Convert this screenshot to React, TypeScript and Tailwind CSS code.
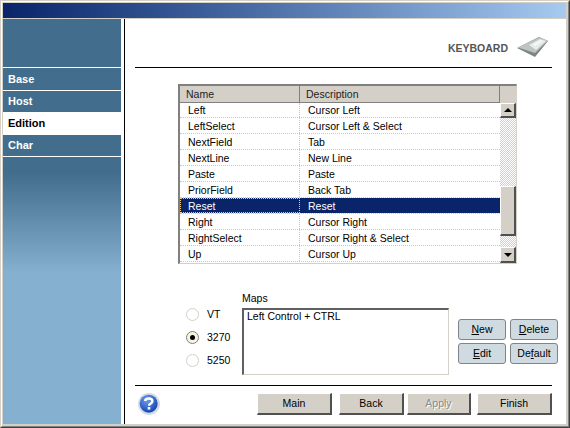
import type { ReactNode } from 'react';

const font = "font-['Liberation_Sans',Arial,sans-serif]";

const rows: [string, string][] = [
  ['Left', 'Cursor Left'],
  ['LeftSelect', 'Cursor Left & Select'],
  ['NextField', 'Tab'],
  ['NextLine', 'New Line'],
  ['Paste', 'Paste'],
  ['PriorField', 'Back Tab'],
  ['Reset', 'Reset'],
  ['Right', 'Cursor Right'],
  ['RightSelect', 'Cursor Right & Select'],
  ['Up', 'Cursor Up']
];

function SideItem({ label, h, active }: { label: string; h: string; active?: boolean }) {
  return (
    <div
      className={`${h} flex items-center pl-[5px] text-[11px] font-bold ${
        active ? 'bg-white text-black' : 'bg-[#426d8d] text-white'
      }`}
    >
      {label}
    </div>
  );
}

function Raised({ children, className = '' }: { children?: ReactNode; className?: string }) {
  return (
    <div
      className={`bg-[#d4d0c8] border-t border-l border-t-white border-l-white border-r-2 border-b-2 border-r-[#505050] border-b-[#505050] flex items-center justify-center ${className}`}
    >
      {children}
    </div>
  );
}

function Radio({ label, checked }: { label: string; checked?: boolean }) {
  return (
    <div className="flex items-center h-[23px] text-[10.5px] text-black">
      <span
        className={`w-[13px] h-[13px] rounded-full border flex items-center justify-center ${
          checked ? 'border-[#808080] bg-[#f8f4e0]' : 'border-[#d4d0c8] bg-white'
        }`}
      >
        {checked ? <span className="w-[5px] h-[5px] rounded-full bg-black" /> : null}
      </span>
      <span className="ml-[8px]">{label}</span>
    </div>
  );
}

function SmallBtn({ first, rest, before = '' }: { first: string; rest: string; before?: string }) {
  return (
    <button className="w-[48px] h-[21px] rounded-[3px] border border-[#7f8486] bg-[#d0dbe1] text-[10.5px] text-black flex items-center justify-center">
      {before}
      <span className="underline">{first}</span>
      {rest}
    </button>
  );
}

function WizardBtn({ label, w, ml, disabled }: { label: string; w: string; ml: string; disabled?: boolean }) {
  return (
    <button
      className={`h-[22px] ${w} ${ml} pt-px bg-[#d4d0c8] border-t border-l border-t-white border-l-white border-r-2 border-b-2 border-r-[#505050] border-b-[#505050] text-[10.5px] ${
        disabled ? 'text-[#8c8a84] [text-shadow:1px_1px_0_#ffffff]' : 'text-black'
      }`}
    >
      {label}
    </button>
  );
}

function KeyboardIcon() {
  return (
    <svg width="32" height="20" viewBox="0 0 32 20" className="block">
      <path d="M0 11 L22 0 L31 4 L18 20 Z" fill="#7f8584" />
      <path d="M1 10.5 L22 0.5 L31 3.5 L18 16 Z" fill="#bcc5c3" />
      <path d="M12 8 L23 2 L29 4 L19 13 Z" fill="#e6ecea" />
      <path d="M16 7 L24 3 L26 4 L18 9 Z" fill="#f6f8f8" />
    </svg>
  );
}

function HelpIcon() {
  return (
    <svg width="22" height="22" viewBox="0 0 22 22" className="block">
      <defs>
        <radialGradient id="helpBall" cx="40%" cy="30%" r="75%">
          <stop offset="0%" stopColor="#6f9fe8" />
          <stop offset="100%" stopColor="#0f3fb0" />
        </radialGradient>
      </defs>
      <circle cx="11" cy="11" r="11" fill="#d3dbe6" />
      <circle cx="10.7" cy="10.7" r="9" fill="url(#helpBall)" />
      <path
        d="M7.2 8 C7.2 4.8 14.4 4.6 14.4 8.2 C14.4 10.4 11 10.4 11 12.8"
        fill="none"
        stroke="white"
        strokeWidth="2.4"
      />
      <rect x="9.7" y="14" width="2.6" height="2.6" fill="white" />
    </svg>
  );
}

function KeyTable() {
  return (
    <div className="w-[339px] h-[180px] border-t-2 border-l-2 border-t-[#808080] border-l-[#808080] border-r border-b border-r-[#d4d0c8] border-b-[#d4d0c8] bg-white flex">
      <div className="w-[320px] flex flex-col">
        <div className="flex h-[17px] bg-[#d4d0c8] border-b border-b-[#808080] text-[10.5px] text-[#222]">
          <div className="w-[120px] pl-[6px] border-r border-r-[#808080] leading-[16px]">Name</div>
          <div className="flex-1 pl-[6px] border-r border-r-[#808080] leading-[16px]">Description</div>
        </div>
        {rows.map(([name, desc], i) => {
          const selected = name === 'Reset';
          return (
            <div
              key={name}
              className={`flex ${i === 0 ? 'h-[15px] leading-[14px]' : 'h-[16px] leading-[16px]'} text-[10.5px] border-b border-dotted border-b-[#c8c8c8] ${
                selected ? 'text-white' : 'text-black'
              }`}
            >
              <div
                className={`w-[120px] pl-[8px] border-r border-dotted border-r-[#c8c8c8] ${
                  selected ? 'bg-[#0a246a] outline-1 outline-dotted outline-offset-[-1px] outline-[#f0d080]' : ''
                }`}
              >
                {name}
              </div>
              <div className={`flex-1 pl-[8px] ${selected ? 'bg-[#0a246a]' : ''}`}>{desc}</div>
            </div>
          );
        })}
      </div>
      <div className="flex-1 flex flex-col">
        <div className="h-[17px] shrink-0 bg-[#d4d0c8]" />
        <Raised className="h-[15px] shrink-0">
          <span className="w-0 h-0 border-x-[4px] border-x-transparent border-b-[4px] border-b-black" />
        </Raised>
        <div className="h-[68px] shrink-0 bg-[repeating-conic-gradient(#d4d0c8_0_25%,#ffffff_0_50%)] bg-[length:2px_2px]" />
        <Raised className="h-[50px] shrink-0" />
        <div className="flex-1 bg-[repeating-conic-gradient(#d4d0c8_0_25%,#ffffff_0_50%)] bg-[length:2px_2px]" />
        <Raised className="h-[16px] shrink-0">
          <span className="w-0 h-0 border-x-[4px] border-x-transparent border-t-[4px] border-t-black" />
        </Raised>
      </div>
    </div>
  );
}

export default function App() {
  return (
    <div className={`${font} w-[570px] h-[428px] overflow-hidden border-t border-l border-t-[#d4d0c8] border-l-[#d4d0c8] border-r border-b border-r-[#404040] border-b-[#404040]`}>
      <div className="h-full border-t border-l border-t-white border-l-white border-r border-b border-r-[#808080] border-b-[#808080]">
        <div className="h-full bg-[#d4d0c8] pt-px pl-px pr-[2px] pb-[2px] flex flex-col">
          <div className="h-[15px] shrink-0 bg-gradient-to-r from-[#0a246a] to-[#a6caf0]" />
          <div className="h-[1px] shrink-0" />
          <div className="flex flex-1 min-h-0 bg-white">
            <aside className="w-[118px] shrink-0 flex flex-col">
              <div className="h-[48px] bg-[#426d8d] mb-[1px]" />
              <SideItem label="Base" h="h-[22px] mb-[1px]" />
              <SideItem label="Host" h="h-[21px]" />
              <SideItem label="Edition" h="h-[23px]" active />
              <SideItem label="Char" h="h-[21px] mb-[1px]" />
              <div className="flex-1 bg-[linear-gradient(to_bottom,#426d8d_0px,#426d8d_16px,#86b0d0_116px,#86b0d0_100%)]" />
            </aside>
            <div className="w-[3px] shrink-0" />
            <div className="w-[1px] shrink-0 bg-black" />
            <main className="flex-1 min-w-0 flex flex-col pl-[10px] pr-[8px]">
              <div className="h-[49px] shrink-0 mr-[6px] border-b border-b-black flex items-start justify-end pt-[18px] pr-[3px]">
                <span className="text-[10.5px] leading-[14px] font-bold text-[#555] mr-[9px] mt-[4px]">KEYBOARD</span>
                <KeyboardIcon />
              </div>
              <div className="pl-[43px] pt-[16px]">
                <KeyTable />
              </div>
              <div className="flex pt-[29px] pl-[51px]">
                <div className="w-[56px] pt-[10px]">
                  <Radio label="VT" />
                  <Radio label="3270" checked />
                  <Radio label="5250" />
                </div>
                <div className="w-[207px]">
                  <div className="text-[10.5px] leading-[10px] text-black h-[15px]">Maps</div>
                  <div className="h-[67px] border-t-2 border-l-2 border-t-[#606060] border-l-[#606060] border-r border-b border-r-[#d4d0c8] border-b-[#d4d0c8] pl-[3px] text-[10.5px] leading-[12px] text-black">
                    Left Control + CTRL
                  </div>
                </div>
                <div className="grid grid-cols-2 gap-x-[4px] gap-y-[3px] ml-[9px] mt-[26px] h-[45px]">
                  <SmallBtn first="N" rest="ew" />
                  <SmallBtn first="D" rest="elete" />
                  <SmallBtn first="E" rest="dit" />
                  <SmallBtn before="De" first="f" rest="ault" />
                </div>
              </div>
              <div className="mt-[10px] mr-[6px] border-t border-t-black flex items-center h-[39px] pb-[3px]">
                <div className="ml-[3px]">
                  <HelpIcon />
                </div>
                <div className="flex-1 flex justify-end">
                  <WizardBtn label="Main" w="w-[75px]" ml="ml-0" />
                  <WizardBtn label="Back" w="w-[65px]" ml="ml-[7px]" />
                  <WizardBtn label="Apply" w="w-[64px]" ml="ml-[3px]" disabled />
                  <WizardBtn label="Finish" w="w-[75px]" ml="ml-[6px]" />
                </div>
              </div>
            </main>
          </div>
        </div>
      </div>
    </div>
  );
}
